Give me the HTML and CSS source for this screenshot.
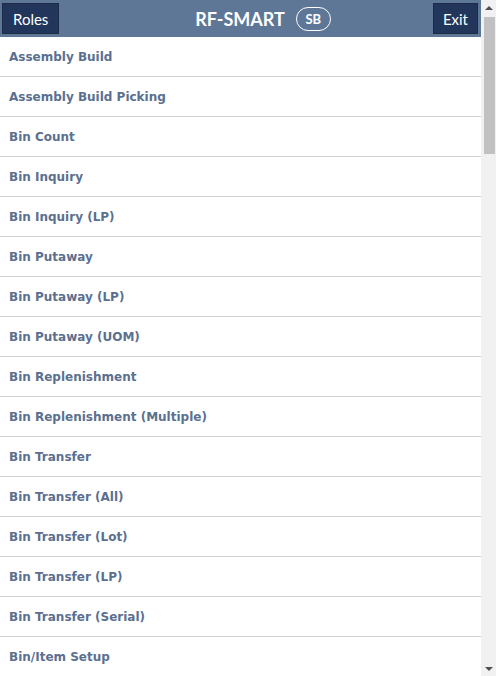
FILE: index.html
```html
<!DOCTYPE html>
<html>
<head>
<meta charset="utf-8">
<link rel="stylesheet" href="styles.css">
</head>
<body>
<div class="app">
  <header class="topbar">
    <div class="left"><button class="btn">Roles</button></div>
    <div class="brand-name">RF-SMART</div>
    <div class="right"><span class="badge">SB</span><button class="btn exit">Exit</button></div>
  </header>
  <ul class="menu">
    <li>Assembly Build</li>
    <li>Assembly Build Picking</li>
    <li>Bin Count</li>
    <li>Bin Inquiry</li>
    <li>Bin Inquiry (LP)</li>
    <li>Bin Putaway</li>
    <li>Bin Putaway (LP)</li>
    <li>Bin Putaway (UOM)</li>
    <li>Bin Replenishment</li>
    <li>Bin Replenishment (Multiple)</li>
    <li>Bin Transfer</li>
    <li>Bin Transfer (All)</li>
    <li>Bin Transfer (Lot)</li>
    <li>Bin Transfer (LP)</li>
    <li>Bin Transfer (Serial)</li>
    <li>Bin/Item Setup</li>
  </ul>
</div>
<div class="scrollbar">
  <div class="arrow up"></div>
  <div class="track"><div class="thumb"></div></div>
  <div class="arrow down"></div>
</div>
</body>
</html>
```
FILE: styles.css
```css
html, body {
  margin: 0;
  padding: 0;
  background: #ffffff;
}
body {
  display: flex;
  height: 100vh;
  overflow: hidden;
}
.app {
  flex: 1;
  min-width: 0;
  display: flex;
  flex-direction: column;
  overflow: hidden;
}
.topbar {
  flex: none;
  height: 37px;
  background: #5e7797;
  display: grid;
  grid-template-columns: 1fr auto 1fr;
  align-items: center;
  padding: 0 3px 0 2px;
  box-sizing: border-box;
}
.left {
  display: flex;
}
.right {
  display: flex;
  align-items: center;
}
.btn {
  height: 31px;
  padding: 0 10px;
  background: #22365b;
  border: 1px solid #1a2a47;
  color: #ffffff;
  font-family: Lato, "Open Sans", sans-serif;
  font-size: 15px;
  border-radius: 0;
}
.exit {
  margin-left: auto;
  padding: 0 9px;
}
.brand-name {
  color: #ffffff;
  font-family: Lato, sans-serif;
  font-weight: 700;
  font-size: 18px;
}
.badge {
  margin-left: 11px;
  box-sizing: border-box;
  height: 24px;
  width: 35px;
  display: flex;
  align-items: center;
  justify-content: center;
  color: #ffffff;
  font-family: Lato, sans-serif;
  font-weight: 700;
  font-size: 13px;
  border: 1px solid #ffffff;
  border-radius: 12px;
  padding-top: 1px;
}
.menu {
  list-style: none;
  margin: 0;
  padding: 0;
  flex: 1;
  overflow: hidden;
}
.menu li {
  height: 39px;
  border-bottom: 1px solid #d0d0d0;
  padding: 0 9px;
  display: flex;
  align-items: center;
  font-family: "DejaVu Sans", Verdana, sans-serif;
  font-weight: 700;
  font-size: 12px;
  color: #5b6f8f;
}
.scrollbar {
  flex: none;
  width: 15px;
  background: #f1f1f1;
  display: flex;
  flex-direction: column;
}
.arrow {
  flex: none;
  height: 17px;
  display: flex;
  justify-content: center;
  align-items: center;
}
.arrow::before {
  content: "";
  width: 0;
  height: 0;
  border-left: 4px solid transparent;
  border-right: 4px solid transparent;
}
.up::before {
  border-bottom: 4px solid #505050;
  margin-top: -2px;
}
.down::before {
  border-top: 4px solid #505050;
  margin-top: 2px;
}
.track {
  flex: 1;
  padding: 0 1px 0 3px;
}
.thumb {
  height: 137px;
  background: #c1c1c1;
}
```
